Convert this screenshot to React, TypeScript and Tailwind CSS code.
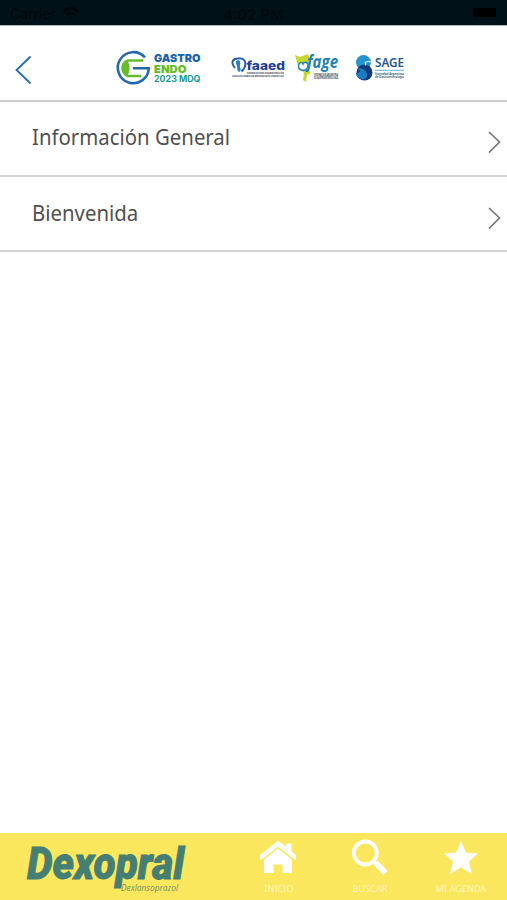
import React from "react";

function Wifi() {
  return (
    <svg width="18" height="14" viewBox="0 0 18 14" className="shrink-0" fill="none" stroke="#000507" strokeWidth="2.4">
      <path d="M1.5 5.2C6-.1 12-.1 16.500 5.200" />
      <path d="M4.500 8.300C7 5.300 11 5.300 13.500 8.300" />
      <path d="M6.800 10.500L9 13l2.200-2.500C10 9.400 8 9.400 6.800 10.500z" fill="#000507" stroke="none" />
    </svg>
  );
}

function StatusBar() {
  return (
    <div className="grid h-[26px] shrink-0 grid-cols-3 items-center border-b border-[#a9b5b6] bg-[#001217] px-2.5 pt-[3px] font-['Inter',sans-serif] text-[14px] leading-none text-[#00070a]">
      <div className="flex items-center gap-1.5">
        <span>Carrier</span>
        <Wifi />
      </div>
      <span className="text-center text-[15px]">4:02 PM</span>
      <span className="mr-px h-[9px] w-[23px] -translate-y-0.5 justify-self-end rounded-[2px] bg-black" />
    </div>
  );
}

function GastroLogo() {
  return (
    <svg width="86" height="36" viewBox="0 0 86 36" className="shrink-0 overflow-visible" fontFamily="Inter, sans-serif">
      <path d="M30 7.500A15.500 15.500 0 1 0 33.800 18.300H18" fill="none" stroke="#2269b0" strokeWidth="2.600" />
      <path d="M11.500 9.500C4.500 13 4.500 23 11.500 27C15.500 22 15.500 14 11.500 9.500z" fill="#65bd2d" />
      <path d="M12 10.500H28M12 26H26" fill="none" stroke="#65bd2d" strokeWidth="2.300" />
      <text x="39" y="12.300" fontSize="11" fontWeight="900" fill="#1763ad" textLength="46.500" lengthAdjust="spacingAndGlyphs">GASTRO</text>
      <text x="39" y="22.500" fontSize="11" fontWeight="900" fill="#68bc22" textLength="32.500" lengthAdjust="spacingAndGlyphs">ENDO</text>
      <text x="39" y="31.500" fontSize="8.500" fontWeight="700" fill="#189c91" textLength="46.500" lengthAdjust="spacingAndGlyphs">2023 MDQ</text>
    </svg>
  );
}

function FaaedLogo() {
  return (
    <svg width="55" height="24" viewBox="0 0 55 24" className="shrink-0 overflow-visible" fontFamily="Inter, sans-serif">
      <path d="M4 12C-1 6 2 2.500 7 2.500C15 1.500 17 9 10.500 15.500" fill="none" stroke="#1e59ae" strokeWidth="1.900" />
      <path d="M5 5C9 3 10 6 9 9S12 14 8 16C5 14 7 10 5 8z" fill="#297fca" />
      <text x="15.500" y="14" fontSize="12" fontWeight="800" fill="#203f97" textLength="38.500" lengthAdjust="spacingAndGlyphs">faaed</text>
      <text x="16" y="18" fontSize="2.600" fontWeight="700" fill="#344158" textLength="37" lengthAdjust="spacingAndGlyphs">FEDERACIÓN ARGENTINA DE</text>
      <text x="1" y="21.300" fontSize="2.600" fontWeight="700" fill="#344158" textLength="52" lengthAdjust="spacingAndGlyphs">ASOCIACIONES DE ENDOSCOPÍA DIGESTIVA</text>
    </svg>
  );
}

function FageLogo() {
  return (
    <svg width="45" height="30" viewBox="0 0 45 30" className="shrink-0 overflow-visible" fontFamily="'Open Sans', sans-serif">
      <path d="M0 1L5 3L13 0L16 9L11 14L16 19L12 21L11 28L8 26L9 19L6 15L3 12z" fill="#c3d72c" />
      <path d="M4 10C1 17 12 19 13 12C14 8 9 7 8 10C7 8 5 8 4 10z" fill="#fff" stroke="#2688b1" strokeWidth="1.600" />
      <text x="12" y="14" fontSize="17" fontStyle="italic" fontWeight="700" fill="#2482b1" textLength="31" lengthAdjust="spacingAndGlyphs">fage</text>
      <text x="19" y="21.800" fontSize="2.600" fontWeight="700" fill="#344044" textLength="24" lengthAdjust="spacingAndGlyphs">FEDERACIÓN ARGENTINA</text>
      <text x="19" y="24.800" fontSize="2.600" fontWeight="700" fill="#344044" textLength="24" lengthAdjust="spacingAndGlyphs">DE GASTROENTEROLOGÍA</text>
    </svg>
  );
}

function SageLogo() {
  return (
    <svg width="51" height="30" viewBox="0 0 51 30" className="shrink-0 overflow-visible" fontFamily="'Noto Sans', sans-serif">
      <circle cx="8.500" cy="9.500" r="7.500" fill="#2394cf" />
      <circle cx="9.500" cy="19.500" r="8" fill="#133b7c" />
      <path d="M1.500 15C7 18 5 20 1 20C1 25 6 27 10 26C14 23 12 18 8 16z" fill="#1b7dbd" />
      <path d="M16 9C12 7 9 10 11 12.500" stroke="#d5edf7" strokeWidth="1.200" fill="none" />
      <text x="20" y="14.300" fontSize="12.500" fontWeight="600" fill="#24558d" textLength="29" lengthAdjust="spacingAndGlyphs">SAGE</text>
      <path d="M20 17.300H49" stroke="#61b5df" strokeWidth="1" />
      <text x="20" y="21.500" fontSize="2.800" fontWeight="600" fill="#28486c" textLength="29" lengthAdjust="spacingAndGlyphs">Sociedad Argentina</text>
      <text x="20" y="24.800" fontSize="2.800" fontWeight="600" fill="#28486c" textLength="29" lengthAdjust="spacingAndGlyphs">de Gastroenterología</text>
    </svg>
  );
}

function Header() {
  return (
    <header className="flex h-[76px] shrink-0 items-start border-b-2 border-[#cfcfcf] pl-[15px]">
      <svg width="17" height="30" viewBox="0 0 17 30" className="mt-[29px] shrink-0" fill="none" stroke="#1b6db4" strokeWidth="1.800">
        <path d="M15.500 1.500L1.500 15L15.500 28.500" />
      </svg>
      <div className="ml-[83px] mt-[24px] flex items-start">
        <GastroLogo />
        <div className="ml-[30px] mt-[6px]"><FaaedLogo /></div>
        <div className="ml-[9px] mt-[4px]"><FageLogo /></div>
        <div className="ml-[15px] mt-[3px]"><SageLogo /></div>
      </div>
    </header>
  );
}

function Row({ label, className }: { label: string; className: string }) {
  return (
    <button className={"flex h-[75px] w-full shrink-0 items-start justify-between border-b-2 border-[#d2d2d2] pl-[31.5px] pr-[6px] text-left " + className}>
      <span className="origin-left scale-x-[0.926] whitespace-nowrap pt-[18px] font-['Noto_Sans',sans-serif] text-[22px] leading-8 text-[#505050]">{label}</span>
      <svg width="13" height="22" viewBox="0 0 13 22" className="mt-[29px] shrink-0" fill="none" stroke="#777" strokeWidth="1.700">
        <path d="M1 1L11.500 11L1 21.500" />
      </svg>
    </button>
  );
}

function Footer() {
  return (
    <footer className="flex h-[67px] shrink-0 items-start bg-[#fae75d] font-['Noto_Sans',sans-serif] text-[9.2px] leading-none text-[#fff6b8]">
      <svg width="170" height="60" viewBox="0 0 170 60" className="ml-[20px] mt-[7px] shrink-0 overflow-visible">
        <text x="7" y="39" fontFamily="Roboto, sans-serif" fontSize="45" fontStyle="italic" fontWeight="900" fill="#457e73" stroke="#457e73" strokeWidth="0.8" textLength="157" lengthAdjust="spacingAndGlyphs">Dexopral</text>
        <text x="101" y="51" fontFamily="'Open Sans', sans-serif" fontSize="8.500" fontStyle="italic" fill="#718f66" textLength="57" lengthAdjust="spacingAndGlyphs">Dexlansoprazol</text>
      </svg>
      <button className="ml-[58px] flex w-[60px] flex-col items-center pt-[8px]">
        <svg width="38" height="34" viewBox="0 0 38 34" fill="#fff">
          <path d="M1 14L19 -0.500L27 5.800V2.500H32.500V10.200L37 14V18.500H35.500L19 5.800L2.500 18.500H1z" />
          <path d="M5 18.500L19 7.500L33 18.500V32H23.500V23.500H14.500V32H5z" />
        </svg>
        <span className="mt-[9px] pl-0.5">INICIO</span>
      </button>
      <button className="ml-[32px] flex w-[60px] flex-col items-center pt-[6px]">
        <svg width="38" height="38" viewBox="0 0 38 38" fill="none" stroke="#fff">
          <circle cx="14.300" cy="14" r="11.500" strokeWidth="3.800" />
          <path d="M22 22.500L26 25" strokeWidth="4" />
          <path d="M25 24L34.500 34" strokeWidth="6" />
        </svg>
        <span className="mt-[7px]">BUSCAR</span>
      </button>
      <button className="ml-[28px] flex w-[66px] flex-col items-center pt-[8px]">
        <svg width="36" height="35" viewBox="0 0 36 35" fill="#fff">
          <path d="M18 0L23 11.500L35 12.500L26 20.500L29 33L18 26.500L7 33L10 20.500L1 12.500L13 11.500z" />
        </svg>
        <span className="mt-[8px] whitespace-nowrap">MI AGENDA</span>
      </button>
    </footer>
  );
}

export default function App() {
  return (
    <div className="flex h-[900px] w-[507px] flex-col overflow-hidden bg-white">
      <StatusBar />
      <Header />
      <main className="flex flex-1 flex-col">
        <Row label="Información General" className="" />
        <Row label="Bienvenida" className="pt-px" />
      </main>
      <Footer />
    </div>
  );
}
